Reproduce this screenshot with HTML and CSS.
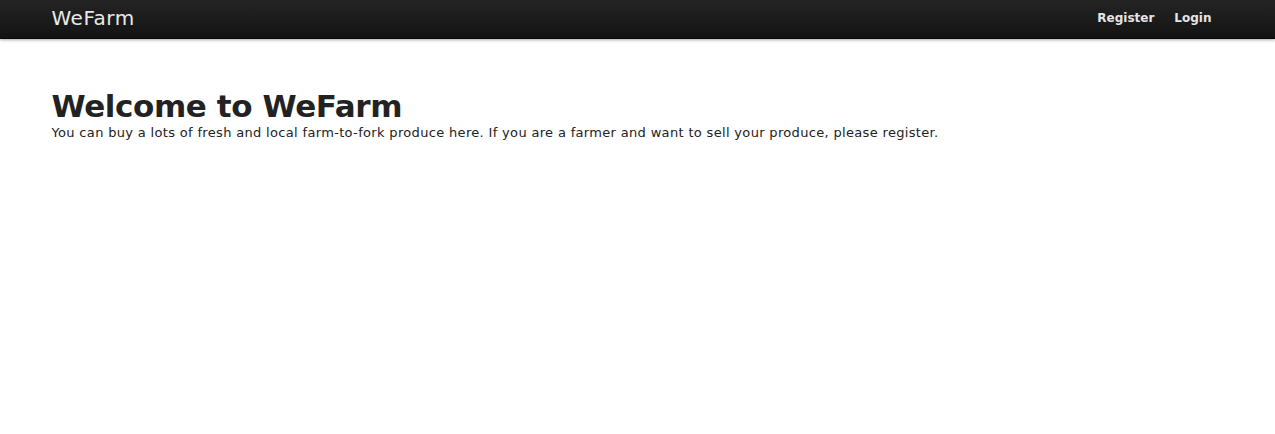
FILE: index.html
```html
<!DOCTYPE html>
<html>
<head>
<meta charset="utf-8">
<link rel="stylesheet" href="styles.css">
</head>
<body>
<div class="navbar">
  <div class="container nav-inner">
    <a class="brand" href="#">WeFarm</a>
    <ul class="nav">
      <li><a href="#">Register</a></li>
      <li><a href="#">Login</a></li>
    </ul>
  </div>
</div>
<div class="container main">
  <h1>Welcome to WeFarm</h1>
  <p>You can buy a lots of fresh and local farm-to-fork produce here. If you are a farmer and want to sell your produce, please register.</p>
</div>
</body>
</html>
```
FILE: styles.css
```css
html, body { margin: 0; padding: 0; background: #fff; }
body {
  font-family: "DejaVu Sans", Verdana, sans-serif;
  font-size: 13px;
  color: #222;
}
.container { width: 1172px; margin: 0 auto; }
.navbar {
  height: 38px;
  background: linear-gradient(#242424, #131313);
  box-shadow: 0 1px 3px rgba(0,0,0,0.35);
  border-bottom: 1px solid #0a0a0a;
}
.nav-inner {
  display: flex;
  justify-content: space-between;
  align-items: center;
  height: 38px;
}
.brand {
  color: #eaeaea;
  font-size: 20px;
  letter-spacing: 0.5px;
  text-decoration: none;
  margin-top: -3px;
}
.nav {
  list-style: none;
  margin: 0;
  padding: 0 12px 0 0;
  display: flex;
  gap: 20px;
  margin-top: -4px;
}
.nav a {
  color: #e5e5e5;
  font-size: 12px;
  font-weight: bold;
  text-decoration: none;
}
.main { padding-top: 50px; }
h1 {
  margin: 0;
  font-size: 31px;
  letter-spacing: -0.4px;
  line-height: 35px;
  font-weight: bold;
  color: #222;
}
p { margin: 0; line-height: 18px; letter-spacing: 0.33px; }
```
